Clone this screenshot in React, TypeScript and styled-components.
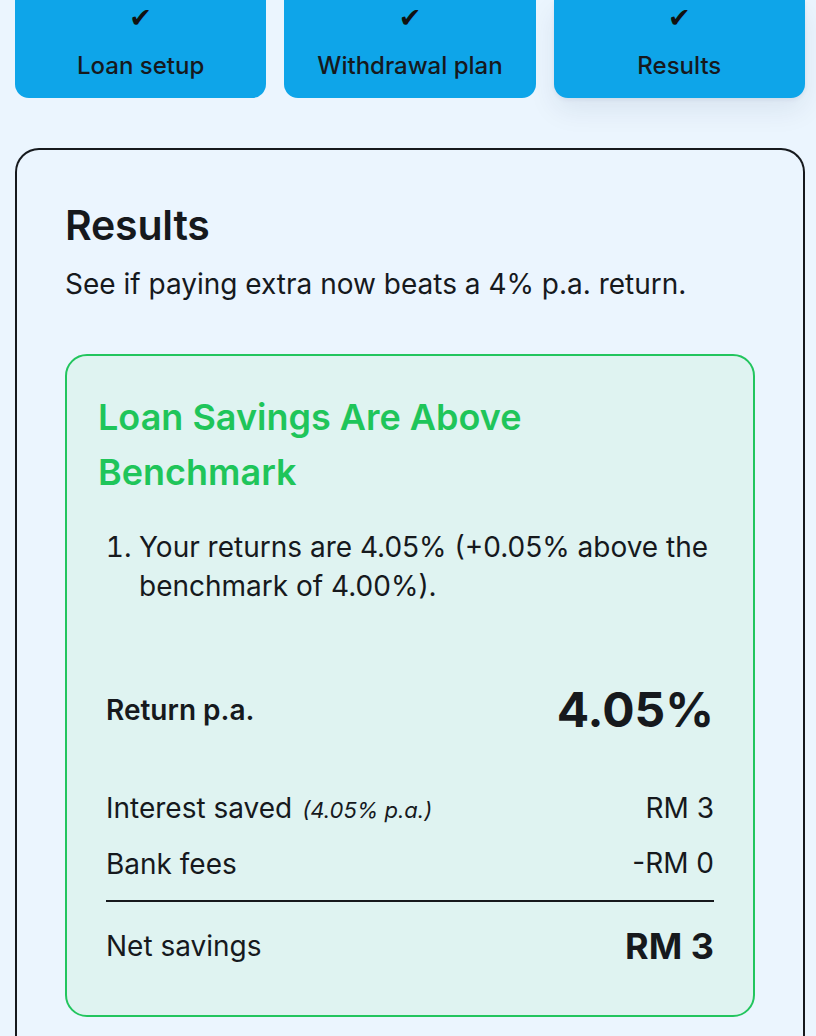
import React from "react";
import styled, { createGlobalStyle } from "styled-components";

const Global = createGlobalStyle`
  html, body { margin: 0; padding: 0; background: #ebf5fe; }
  body { font-family: Inter, "Noto Sans", "Liberation Sans", sans-serif; color: #16191d; }
  * { box-sizing: border-box; }
`;

const Page = styled.div`
  padding: 0 11px 0 15px;
  display: flex;
  flex-direction: column;
  gap: 50px;
`;

const Tabs = styled.div`
  display: grid;
  grid-template-columns: repeat(3, 1fr);
  gap: 18px;
`;

const Tab = styled.div<{ $active?: boolean }>`
  height: 98px;
  background: #0ea5e9;
  border-radius: 0 0 14px 14px;
  display: flex;
  flex-direction: column;
  align-items: center;
  padding-top: 4px;
  box-shadow: ${(p) => (p.$active ? "0 12px 28px rgba(15, 40, 80, 0.08), 0 2px 4px rgba(15,40,80,0.06)" : "none")};
`;

const Check = styled.span`
  font-family: "DejaVu Sans", sans-serif;
  font-size: 27px;
  line-height: 28px;
  color: #111;
`;

const TabLabel = styled.span`
  margin-top: 20px;
  font-size: 24px;
  font-weight: 500;
  line-height: 28px;
  color: #16191d;
`;

const Card = styled.section`
  border: 2px solid #16191d;
  border-bottom: none;
  border-radius: 24px 24px 0 0;
  background: #ebf5fe;
  padding: 51px 48px 40px;
  min-height: 900px;
`;

const Heading = styled.h2`
  margin: 0;
  font-size: 41px;
  font-weight: 600;
  line-height: 48px;
  letter-spacing: -0.2px;
`;

const Sub = styled.p`
  margin: 15px 0 0;
  font-size: 28px;
  line-height: 40px;
  font-weight: 400;
`;

const ResultBox = styled.div`
  margin-top: 50px;
  border: 2px solid #22c55e;
  border-radius: 22px;
  background: #dff3f1;
  padding: 34px 31px 47px;
`;

const BoxTitle = styled.h3`
  margin: 0;
  color: #1fc55a;
  font-size: 36px;
  font-weight: 600;
  line-height: 55px;
`;

const Inner = styled.div`
  padding: 0 8px;
`;

const List = styled.ol`
  margin: 28px 0 0;
  padding-left: 33px;
  font-size: 28px;
  line-height: 39px;
`;

const Row = styled.div<{ $gap?: number }>`
  display: flex;
  justify-content: space-between;
  align-items: center;
  margin-top: ${(p) => p.$gap ?? 0}px;
`;

const Label = styled.span<{ $bold?: boolean }>`
  font-size: 28px;
  font-weight: ${(p) => (p.$bold ? 600 : 400)};
  line-height: 40px;
`;

const Note = styled.em`
  font-size: 22px;
  margin-left: 10px;
`;

const Value = styled.span<{ $size?: number; $bold?: boolean }>`
  font-size: ${(p) => p.$size ?? 28}px;
  font-weight: ${(p) => (p.$bold ? 700 : 400)};
  line-height: 1.2;
`;

const Divider = styled.hr`
  border: none;
  border-top: 2px solid #16191d;
  margin: 16px 0 0;
`;

export default function App() {
  return (
    <>
      <Global />
      <Page>
        <Tabs>
          <Tab>
            <Check>✔</Check>
            <TabLabel>Loan setup</TabLabel>
          </Tab>
          <Tab>
            <Check>✔</Check>
            <TabLabel>Withdrawal plan</TabLabel>
          </Tab>
          <Tab $active>
            <Check>✔</Check>
            <TabLabel>Results</TabLabel>
          </Tab>
        </Tabs>
        <Card>
          <Heading>Results</Heading>
          <Sub>See if paying extra now beats a 4% p.a. return.</Sub>
          <ResultBox>
            <BoxTitle>Loan Savings Are Above Benchmark</BoxTitle>
            <Inner>
              <List>
                <li>Your returns are 4.05% (+0.05% above the benchmark of 4.00%).</li>
              </List>
              <Row $gap={75}>
                <Label $bold>Return p.a.</Label>
                <Value $size={48} $bold>4.05%</Value>
              </Row>
              <Row $gap={49}>
                <Label>
                  Interest saved<Note>(4.05% p.a.)</Note>
                </Label>
                <Value>RM 3</Value>
              </Row>
              <Row $gap={14}>
                <Label>Bank fees</Label>
                <Value>-RM 0</Value>
              </Row>
              <Divider />
              <Row $gap={23}>
                <Label>Net savings</Label>
                <Value $size={36} $bold>RM 3</Value>
              </Row>
            </Inner>
          </ResultBox>
        </Card>
      </Page>
    </>
  );
}
